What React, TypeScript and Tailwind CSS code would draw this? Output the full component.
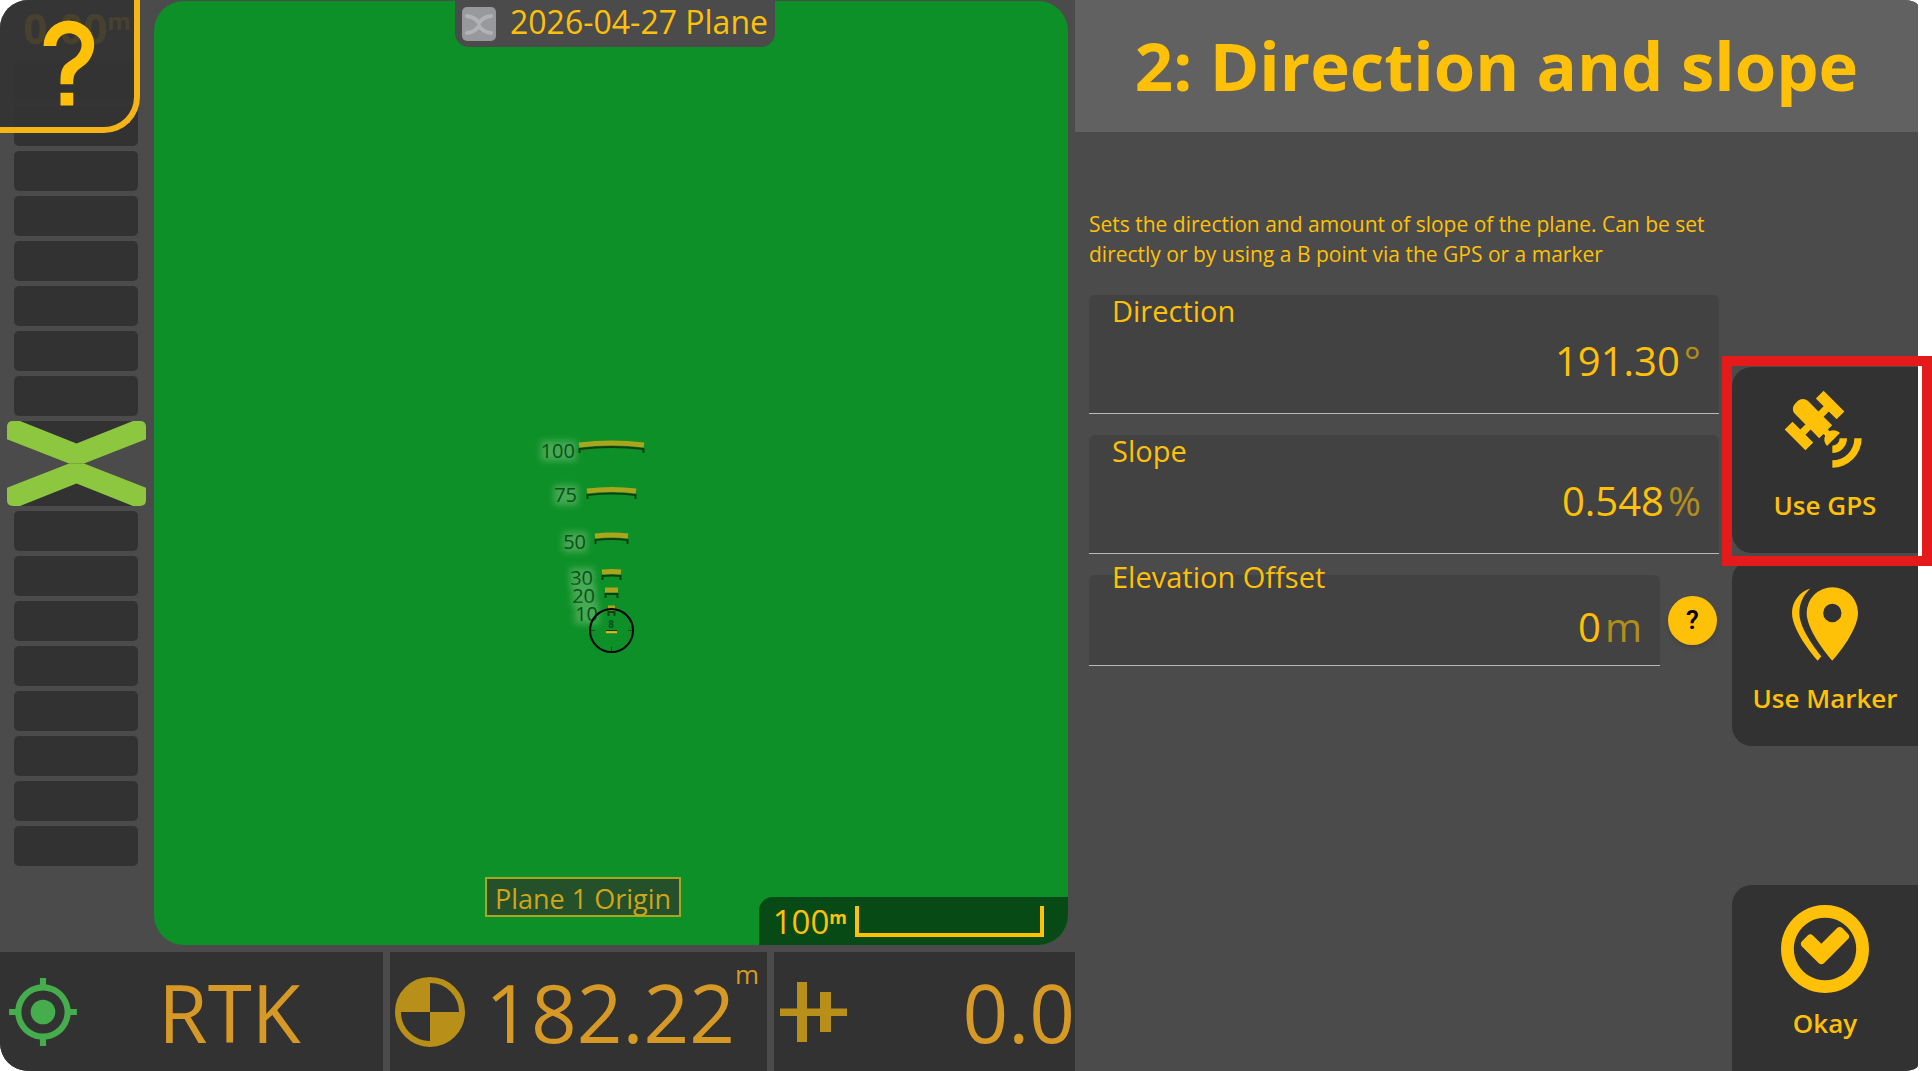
import type { ReactNode } from "react";

const icons = {
  help: "M10,19H13V22H10V19M12,2C17.35,2.22 19.68,7.62 16.5,11.67C15.67,12.67 14.33,13.33 13.67,14.17C13,15 13,16 13,17H10C10,15.33 10,13.92 10.67,12.92C11.33,11.92 12.67,11.33 13.5,10.67C15.92,8.43 15.32,5.26 12,5A3,3 0 0,0 9,8H6A6,6 0 0,1 12,2Z",
  satellite:
    "M11.62,1L17.28,6.67L15.16,8.79L13.04,6.67L11.62,8.09L13.95,10.41L12.79,11.58L13.24,12.04C14.17,11.61 15.31,11.77 16.07,12.54L12.54,16.07C11.77,15.31 11.61,14.17 12.04,13.24L11.58,12.79L10.41,13.95L8.09,11.62L6.67,13.04L8.79,15.16L6.67,17.28L1,11.62L3.14,9.5L5.26,11.62L6.67,10.21L3.84,7.38C3.06,6.6 3.06,5.33 3.84,4.55L4.55,3.84C5.33,3.06 6.6,3.06 7.38,3.84L10.21,6.67L11.62,5.26L9.5,3.14L11.62,1M18,14A4,4 0 0,1 14,18V16A2,2 0 0,0 16,14H18M22,14A8,8 0 0,1 14,22V20A6,6 0 0,0 20,14H22Z",
  markers:
    "M14,11.5A2.5,2.5 0 0,0 16.5,9A2.5,2.5 0 0,0 14,6.5A2.5,2.5 0 0,0 11.5,9A2.5,2.5 0 0,0 14,11.5M14,2C17.86,2 21,5.13 21,9C21,14.25 14,22 14,22C14,22 7,14.25 7,9A7,7 0 0,1 14,2M5,9C5,13.5 10.08,19.66 11,20.81L10,22C10,22 3,14.25 3,9C3,5.83 5.11,3.15 8,2.29C6.16,3.94 5,6.33 5,9Z",
  crosshair:
    "M12,8A4,4 0 0,1 16,12A4,4 0 0,1 12,16A4,4 0 0,1 8,12A4,4 0 0,1 12,8M3.05,13H1V11H3.05C3.5,6.83 6.83,3.5 11,3.05V1H13V3.05C17.17,3.5 20.5,6.83 20.95,11H23V13H20.95C20.5,17.17 17.17,20.5 13,20.95V23H11V20.95C6.83,20.5 3.5,17.17 3.05,13M12,5A7,7 0 0,0 5,12A7,7 0 0,0 12,19A7,7 0 0,0 19,12A7,7 0 0,0 12,5Z",
};

function Icon({ path, className }: { path: string; className: string }) {
  return (
    <svg viewBox="0 0 24 24" fill="currentColor" fillRule="evenodd" className={className}>
      <path d={path} />
    </svg>
  );
}

function CheckIcon() {
  return (
    <svg viewBox="0 128 1536 1536" fill="currentColor" className="size-[88px]">
      <path d="M1171 723l-422 422q-19 19-45 19t-45-19l-294-294q-19-19-19-45t19-45l102-102q19-19 45-19t45 19l147 147 275-275q19-19 45-19t45 19l102 102q19 19 19 45t-19 45zM1312 896q0-148-73-273t-198-198-273-73-273 73-198 198-73 273 73 273 198 198 273 73 273-73 198-198 73-273zm224 0q0 209-103 385.5t-279.5 279.5-385.5 103-385.5-103-279.5-279.5-103-385.5 103-385.5 279.5-279.5 385.5-103 385.5 103 279.5 279.5 103 385.5z" />
    </svg>
  );
}

/* Light bar on the left, on-grade marker in the middle */
function LightBar() {
  return (
    <div className="grid min-h-0 flex-1 auto-rows-fr gap-[5px] pl-3.5 pr-4">
      {Array.from({ length: 8 }, (_, i) => (
        <div key={i} className="rounded-[5px] bg-[#323232]" />
      ))}
      <div className="relative row-span-2 -ml-[7px] -mr-2">
        <svg viewBox="0 0 139 89" preserveAspectRatio="none" className="absolute inset-0 size-full">
          <path d="M8 0H131L69.5 26ZM8 89H131L69.5 63Z" fill="#323232" />
          <g fill="#8dc63f">
            <path d="M6 0H13L69.500 23.500L126 0H133Q139 0 139 6V19L77 44.500H62L0 19V6Q0 0 6 0Z" />
            <path d="M6 89H13L69.500 65.500L126 89H133Q139 89 139 83V70L77 44.500H62L0 70V83Q0 89 6 89Z" />
          </g>
        </svg>
      </div>
      {Array.from({ length: 8 }, (_, i) => (
        <div key={i} className="rounded-[5px] bg-[#323232]" />
      ))}
    </div>
  );
}

const rings = [
  { label: "100", tx: 54, ty: 38, x1: 59, x2: 124, y: 26, bend: 4 },
  { label: "75", tx: 56, ty: 82, x1: 67, x2: 116, y: 72, bend: 3 },
  { label: "50", tx: 65, ty: 129, x1: 75, x2: 108, y: 117, bend: 2 },
  { label: "30", tx: 72, ty: 165, x1: 82, x2: 101, y: 153, bend: 1 },
  { label: "20", tx: 74, ty: 183, x1: 85, x2: 98, y: 171, bend: 0 },
  { label: "10", tx: 77, ty: 201, x1: 88, x2: 95, y: 189, bend: 0 },
];

function RangeRings() {
  return (
    <svg viewBox="0 0 160 250" className="absolute left-[40%] top-[419px] h-[250px] w-[160px]">
      <defs>
        <filter id="halo" x="-40%" y="-40%" width="180%" height="180%">
          <feGaussianBlur stdDeviation="3" />
        </filter>
      </defs>
      {rings.map((r) => {
        const mid = (r.x1 + r.x2) / 2;
        return (
          <g key={r.label}>
            <rect
              x={r.tx - r.label.length * 11}
              y={r.ty - 17}
              width={r.label.length * 11 + 2}
              height="20"
              fill="#7cc47a"
              opacity="0.5"
              filter="url(#halo)"
            />
            <text
              x={r.tx + 1}
              y={r.ty}
              textAnchor="end"
              fill="#0c4f1d"
              className="text-[20px]"
            >
              {r.label}
            </text>
            <path
              d={`M${r.x1 + 0.5} ${r.y + 7}V${r.y + 3}Q${mid} ${r.y + 3 - r.bend} ${r.x2 - 0.5} ${r.y + 3}V${r.y + 7}`}
              fill="none"
              stroke="#103f14"
              strokeWidth="2"
            />
            <path
              d={`M${r.x1} ${r.y - 1}Q${mid} ${r.y - 1 - r.bend} ${r.x2} ${r.y - 1}`}
              fill="none"
              stroke="#aba51c"
              strokeWidth="5"
            />
          </g>
        );
      })}
      <circle cx="91.5" cy="210.500" r="21.500" fill="none" stroke="#000" strokeWidth="2" />
      <path d="M71 210.500h4M108 210.500h4M91.500 227v4" stroke="#0c4f1d" strokeWidth="1" />
      <text x="91" y="208" textAnchor="middle" fill="#0c4f1d" className="text-[10px] font-bold">
        8
      </text>
      <path d="M86 210.500h11" stroke="#103f14" strokeWidth="1" />
      <path d="M86 212.200h11" stroke="#f0b41a" strokeWidth="2" />
    </svg>
  );
}

function MapView() {
  return (
    <div className="relative mr-[7px] mt-px mb-[7px] flex flex-1 flex-col items-center justify-between overflow-hidden rounded-[30px] bg-[#0e9029]">
      <div className="-mt-px ml-2 flex h-[47px] items-center gap-3.5 rounded-b-[14px] bg-[#4b4b4b] px-[7px]">
        <svg viewBox="0 0 34 34" className="size-[34px]">
          <rect width="34" height="34" rx="5" fill="#98999d" />
          <path
            d="M5 9Q13 10 17 16Q21 10 29 9M5 26Q13 25 17 19Q21 25 29 26"
            fill="none"
            stroke="#b2b3b5"
            strokeWidth="4"
            strokeLinecap="round"
          />
        </svg>
        <span className="self-start text-[32px] leading-[44px]">2026-04-27 Plane</span>
      </div>

      <RangeRings />

      <div className="flex w-full items-end justify-between">
        <div className="mb-7 ml-[331px] border-2 border-[#a9a51e] bg-[#24502a] px-2 pt-1 text-[27px] leading-8 text-[#d0a518]">
          Plane 1 Origin
        </div>
        <div className="flex h-12 items-center gap-2 rounded-tl-[14px] bg-[#074a15] pl-3.5 pr-6">
          <div className="flex items-start pt-0.5 text-[33px] leading-[48px]">
            100<span className="text-[18px] font-bold leading-[38px]">m</span>
          </div>
          <div className="h-[31px] w-[189px] border-x-4 border-b-4 border-[#ffc107]" />
        </div>
      </div>
    </div>
  );
}

function StatusBar() {
  return (
    <div className="flex h-[119px] gap-[7px] text-[80px] leading-[119px] text-[#d79926]">
      <div className="flex flex-[377_1_0%] items-center rounded-bl-[28px] bg-[#323232] pl-1.5">
        <Icon path={icons.crosshair} className="size-[74px] text-[#45ad4c]" />
        <span className="flex-1 pr-1 text-center">RTK</span>
      </div>
      <div className="flex flex-[364_1_0%] items-center justify-between bg-[#323232] pl-[5px] pr-2">
        <svg viewBox="0 0 70 70" className="size-[70px]">
          <circle cx="35" cy="35" r="32" fill="none" stroke="#b88f18" strokeWidth="6" />
          <path d="M35 35V2A33 33 0 0 0 2 35ZM35 35H68A33 33 0 0 1 35 68Z" fill="#b88f18" />
        </svg>
        <div className="flex items-start">
          182.22
          <span className="text-[26px] leading-[44px]">m</span>
        </div>
      </div>
      <div className="flex flex-[295_1_0%] items-center justify-between bg-[#323232] pl-1.5">
        <svg viewBox="0 0 67 60" className="h-[60px] w-[67px]" fill="#b88f18">
          <path d="M0 26.500H67V34H0ZM17 0H27V60H17ZM40 10H51V50H40Z" />
        </svg>
        <span>0.0</span>
      </div>
    </div>
  );
}

type FieldProps = {
  id: string;
  label: string;
  value: string;
  unit: string;
  short?: boolean;
};

function Field({ id, label, value, unit, short }: FieldProps) {
  return (
    <div
      className={`${short ? "h-[91px]" : "h-[119px]"} flex min-w-0 flex-1 flex-col justify-center rounded-t-[6px] border-b border-[#b8b8b8] bg-[#424242]`}
    >
      <label htmlFor={id} className="shrink-0 pl-[23px] text-[29px] leading-8">
        {label}
      </label>
      <div className="flex shrink-0 items-center gap-1 pb-7 pr-[18px] pt-2.5 text-[40px] leading-[48px]">
        <input
          id={id}
          defaultValue={value}
          className="min-w-0 flex-1 bg-transparent text-right outline-none"
        />
        <span className="text-[#b38d1b]">{unit}</span>
      </div>
    </div>
  );
}

function SideButton({ label, corner, children }: { label: string; corner?: boolean; children: ReactNode }) {
  return (
    <button
      className={`${corner ? "rounded-tl-[20px] rounded-br-[14px_6px]" : "rounded-l-[20px]"} flex h-[186px] w-full flex-col items-center gap-3 bg-[#323232] pt-5 text-[26px] font-semibold leading-9`}
    >
      {children}
      {label}
    </button>
  );
}

export default function App() {
  return (
    <div className="h-screen bg-white pr-3.5 font-['Open_Sans','Noto_Sans',sans-serif] text-[#ffc107]">
      <div className="flex h-full rounded-l-[28px] rounded-r-[14px_6px] bg-[#4b4b4b]">
        {/* Map and status */}
        <div className="relative flex min-w-0 flex-[1075_1_0%] flex-col">
          <div className="flex min-h-0 flex-1">
            <div className="flex w-[154px] flex-col pb-[86px]">
              <div className="flex h-[61px] shrink-0 justify-center pt-1 text-[42px] font-bold leading-[48px]">
                0.00<span className="text-[24px] leading-[34px]">m</span>
              </div>
              <LightBar />
            </div>
            <MapView />
          </div>
          <StatusBar />
          <button
            aria-label="Help"
            className="absolute left-0 top-0 flex h-[133px] w-[140px] justify-center rounded-br-[36px] rounded-tl-[28px] border-b-[6px] border-r-[6px] border-[#f5b417] bg-[#333333]/90 pl-1 pt-3"
          >
            <Icon path={icons.help} className="size-[102px]" />
          </button>
        </div>

        {/* Step panel */}
        <div className="flex min-w-0 flex-[843_1_0%] flex-col">
          <h1 className="h-[132px] rounded-tr-[14px_6px] bg-[#616161] text-center text-[67px] font-bold leading-[130px]">
            2: Direction and slope
          </h1>
          <div className="flex flex-1 gap-[13px] pl-3.5">
            <div className="flex min-w-0 flex-1 flex-col gap-[21px] pt-[77px]">
              <p className="mb-[5px] text-[21px] leading-[30px]">
                Sets the direction and amount of slope of the plane. Can be set
                directly or by using a B point via the GPS or a marker
              </p>
              <div className="flex">
                <Field id="direction" label="Direction" value="191.30" unit="°" />
              </div>
              <div className="flex">
                <Field id="slope" label="Slope" value="0.548" unit="%" />
              </div>
              <div className="flex items-center gap-2">
                <Field id="offset" label="Elevation Offset" value="0" unit="m" short />
                <button className="mr-0.5 size-[49px] rounded-full bg-[#ffc107] font-['Roboto',sans-serif] text-[26px] font-semibold text-black shadow-md">
                  ?
                </button>
              </div>
            </div>

            <div className="flex w-[186px] flex-col gap-[7px] pt-[235px]">
              <div className="relative">
                <SideButton label="Use GPS">
                  <Icon path={icons.satellite} className="size-[88px]" />
                </SideButton>
                {/* Highlight frame */}
                <div className="pointer-events-none absolute -bottom-[13px] -left-[10px] -right-3.5 -top-[11px] border-[10px] border-[#e51b1b]" />
              </div>
              <SideButton label="Use Marker">
                <Icon path={icons.markers} className="size-[88px]" />
              </SideButton>
              <div className="mt-auto">
                <SideButton label="Okay" corner>
                  <CheckIcon />
                </SideButton>
              </div>
            </div>
          </div>
        </div>
      </div>
    </div>
  );
}
